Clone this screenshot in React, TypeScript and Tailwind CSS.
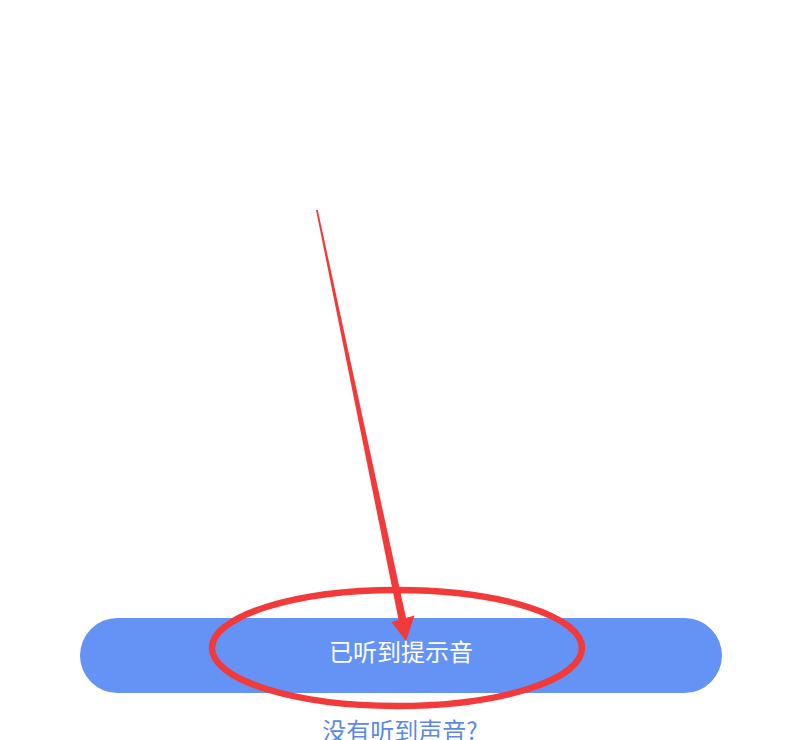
const Arrow = () => (
  <svg className="pointer-events-none absolute inset-0" width="800" height="740" viewBox="0 0 800 740">
    <ellipse cx="397" cy="648" rx="185" ry="58" fill="none" stroke="#f23a3a" strokeWidth="6.5" />
    <polygon points="316,210 317.8,210 406.5,620 399,622" fill="#f23a3a" />
    <polygon points="391.5,622 414.5,615.5 406,641" fill="#f23a3a" />
  </svg>
);

const App = () => {
  return (
    <div className="relative h-[740px] w-[800px] overflow-hidden bg-white font-['Noto_Sans_CJK_SC','Noto_Sans',sans-serif]">
      <div className="flex flex-col pt-[618px]">
        <button className="ml-20 flex h-[75px] w-[642px] items-center justify-center rounded-full bg-[#6592f5] pb-[10px] text-[24px] leading-none text-white">
          已听到提示音
        </button>
        <p className="mt-[20px] text-center text-[24px] leading-[34px] text-[#5d89e3]">没有听到声音?</p>
      </div>
      <Arrow />
    </div>
  );
};

export default App;
